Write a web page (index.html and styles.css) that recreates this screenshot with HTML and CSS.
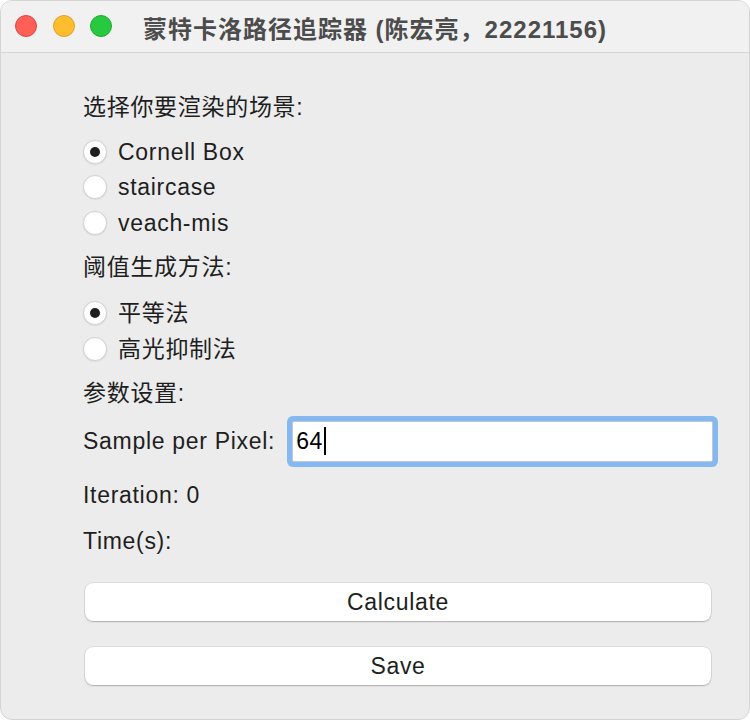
FILE: index.html
```html
<!DOCTYPE html>
<html lang="zh-CN">
<head>
<meta charset="utf-8">
<title>蒙特卡洛路径追踪器</title>
<link rel="stylesheet" href="styles.css">
</head>
<body>
<div class="window">
  <div class="titlebar">
    <div class="lights">
      <span class="light red"></span>
      <span class="light yellow"></span>
      <span class="light green"></span>
    </div>
    <div class="title">蒙特卡洛路径追踪器 (陈宏亮，22221156)</div>
  </div>
  <div class="content">
    <div class="heading">选择你要渲染的场景:</div>
    <div class="group">
      <div class="radio-row"><span class="radio checked"></span><span class="label">Cornell Box</span></div>
      <div class="radio-row"><span class="radio"></span><span class="label">staircase</span></div>
      <div class="radio-row"><span class="radio"></span><span class="label">veach-mis</span></div>
    </div>
    <div class="heading">阈值生成方法:</div>
    <div class="group second">
      <div class="radio-row"><span class="radio checked"></span><span class="label">平等法</span></div>
      <div class="radio-row"><span class="radio"></span><span class="label">高光抑制法</span></div>
    </div>
    <div class="heading">参数设置:</div>
    <div class="input-row">
      <span class="label">Sample per Pixel:</span>
      <div class="field"><span class="value">64</span><span class="caret"></span></div>
    </div>
    <div class="info first">Iteration: 0</div>
    <div class="info">Time(s):</div>
    <div class="button calc">Calculate</div>
    <div class="button save">Save</div>
  </div>
</div>
</body>
</html>
```

FILE: styles.css
```css
html, body {
  margin: 0;
  padding: 0;
  background: #ffffff;
}

body {
  width: 750px;
  height: 720px;
  overflow: hidden;
  font-family: "Liberation Sans", Arial, "Noto Sans CJK SC", sans-serif;
  font-size: 23px;
  letter-spacing: 0.7px;
  color: #1e1e1e;
}

.window {
  width: 750px;
  height: 720px;
  box-sizing: border-box;
  border-radius: 12px;
  background: #ececec;
  overflow: hidden;
  border: 1px solid #d4d4d4;
  display: flex;
  flex-direction: column;
}

.titlebar {
  height: 51px;
  flex: none;
  background: #f1f1f1;
  border-bottom: 1px solid #d6d6d6;
  position: relative;
  display: flex;
  align-items: center;
  justify-content: center;
}

.lights {
  position: absolute;
  left: 14px;
  top: 14px;
  display: flex;
  gap: 15.5px;
}

.light {
  width: 22px;
  height: 22px;
  box-sizing: border-box;
  border-radius: 50%;
}
.light.red { background: #fe5f57; border: 1px solid #e2463f; }
.light.yellow { background: #febc2e; border: 1px solid #e0a123; }
.light.green { background: #28c840; border: 1px solid #1dad2b; }

.title {
  font-weight: bold;
  color: #4c4c4c;
  font-size: 24px;
  letter-spacing: 1px;
  margin-top: 1px;
}

.content {
  flex: 1;
  display: flex;
  flex-direction: column;
  padding: 36px 38px 0 82px;
}

.heading {
  height: 36px;
  line-height: 36px;
}

.group {
  display: flex;
  flex-direction: column;
  margin-top: 9px;
  margin-bottom: 8px;
}

.group.second {
  margin-top: 11px;
}

.radio-row {
  height: 35.5px;
  display: flex;
  align-items: center;
  gap: 11px;
}

.radio {
  width: 24px;
  height: 24px;
  box-sizing: border-box;
  border-radius: 50%;
  background: #ffffff;
  border: 1px solid #d2d2d2;
  box-shadow: 0 0.5px 1.5px rgba(0, 0, 0, 0.12);
  display: flex;
  align-items: center;
  justify-content: center;
  flex: none;
}

.radio.checked::after {
  content: "";
  width: 10px;
  height: 10px;
  border-radius: 50%;
  background: #1e1e1e;
}

.label {
  line-height: 36px;
}

.input-row {
  display: flex;
  align-items: center;
  gap: 17px;
  margin-top: 5px;
  height: 51px;
}

.field {
  flex: 1;
  height: 41px;
  box-sizing: border-box;
  background: #ffffff;
  border: 1px solid #bfc8d4;
  border-radius: 2px;
  box-shadow: 0 0 0 5px #85b7f1;
  margin-right: -2px;
  display: flex;
  align-items: center;
  padding-left: 3px;
  color: #000000;
}

.value {
  letter-spacing: 0.5px;
}

.caret {
  width: 2px;
  height: 28px;
  background: #000000;
  margin-left: 1px;
}

.info {
  height: 36px;
  line-height: 36px;
  margin-top: 10px;
}

.button {
  height: 38px;
  box-sizing: border-box;
  background: #ffffff;
  border-radius: 8px;
  box-shadow: 0 0 0 0.5px rgba(0, 0, 0, 0.12), 0 1px 1.5px rgba(0, 0, 0, 0.22);
  text-align: center;
  line-height: 38px;
  margin-left: 2px;
}

.button.calc {
  margin-top: 24px;
}

.button.save {
  margin-top: 26px;
}
```
